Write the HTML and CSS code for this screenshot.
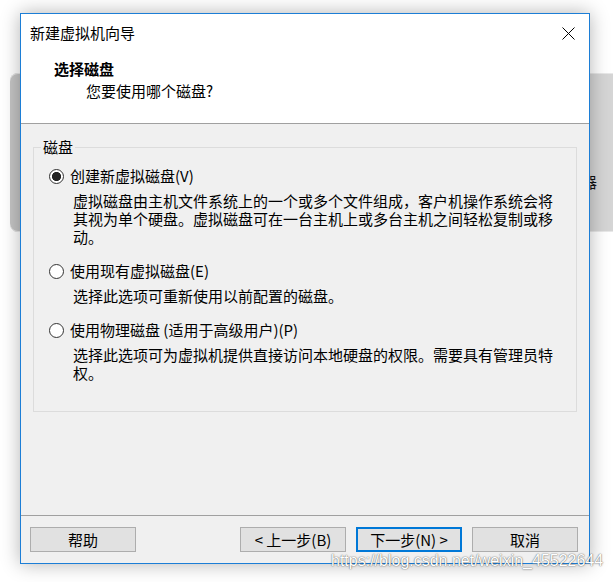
FILE: index.html
```html
<!DOCTYPE html>
<html lang="zh-CN">
<head>
<meta charset="utf-8">
<title>新建虚拟机向导</title>
<link rel="stylesheet" href="styles.css">
</head>
<body>
<div class="bgwin"><span class="bgwin-text">器</span></div>
<div class="dialog">
  <div class="titlebar">
    <span class="title">新建虚拟机向导</span>
    <svg class="close" width="13" height="13" viewBox="0 0 13 13"><path d="M0.5 0.5 L12.5 12.5 M12.5 0.5 L0.5 12.5" stroke="#000" stroke-width="1" fill="none"/></svg>
  </div>
  <div class="header">
    <div class="h-title">选择磁盘</div>
    <div class="h-sub">您要使用哪个磁盘?</div>
  </div>
  <div class="content">
    <div class="group">
      <span class="legend">磁盘</span>
      <div class="option">
        <div class="opt-label"><span class="radio checked"></span>创建新虚拟磁盘(V)</div>
        <div class="opt-desc">虚拟磁盘由主机文件系统上的一个或多个文件组成，客户机操作系统会将其视为单个硬盘。虚拟磁盘可在一台主机上或多台主机之间轻松复制或移动。</div>
      </div>
      <div class="option">
        <div class="opt-label"><span class="radio"></span>使用现有虚拟磁盘(E)</div>
        <div class="opt-desc">选择此选项可重新使用以前配置的磁盘。</div>
      </div>
      <div class="option">
        <div class="opt-label"><span class="radio"></span>使用物理磁盘 (适用于高级用户)(P)</div>
        <div class="opt-desc">选择此选项可为虚拟机提供直接访问本地硬盘的权限。需要具有管理员特权。</div>
      </div>
    </div>
  </div>
  <div class="footer">
    <button class="btn">帮助</button>
    <div class="spacer"></div>
    <button class="btn">&lt; 上一步(B)</button>
    <button class="btn default">下一步(N) &gt;</button>
    <button class="btn">取消</button>
  </div>
</div>
<div class="watermark">https://blog.csdn.net/weixin_45522644</div>
</body>
</html>
```
FILE: styles.css
```css
html, body { margin: 0; padding: 0; }
body {
  width: 613px;
  height: 582px;
  overflow: hidden;
  background: #fff;
  font-family: "Noto Sans CJK SC", "Noto Sans", sans-serif;
  font-size: 15px;
  color: #000;
  position: relative;
  padding: 13px 0 0 20px;
  box-sizing: border-box;
}
.bgwin {
  position: absolute;
  left: 10px;
  top: 73px;
  width: 603px;
  height: 159px;
  overflow: hidden;
  border-radius: 8px 0 0 8px;
  background: linear-gradient(to right, #c4c4c4 0 11px, #d5d5d5 11px);
  box-shadow: inset 0 1px 0 #e8e8e8, inset 0 -1px 0 #e8e8e8;
  z-index: 0;
}
.bgwin-text {
  position: absolute;
  left: 572px;
  top: 100px;
  line-height: 18px;
  color: #111;
}
.dialog {
  position: relative;
  z-index: 1;
  width: 570px;
  height: 551px;
  box-sizing: border-box;
  border: 1px solid #1c7ed6;
  background: #f0f0f0;
  box-shadow: 0 0 18px rgba(0, 0, 0, .3);
  display: flex;
  flex-direction: column;
}
.titlebar {
  flex: none;
  height: 38px;
  background: #fff;
  display: flex;
  align-items: center;
  justify-content: space-between;
  padding: 0 14px 0 9px;
}
.title { line-height: 18px; }
.close { display: block; }
.header {
  flex: none;
  background: #fff;
  padding: 8px 0 23px;
  border-bottom: 1px solid #a0a0a0;
}
.h-title { font-weight: bold; line-height: 18px; padding-left: 33px; }
.h-sub { line-height: 18px; margin-top: 4px; padding-left: 65px; }
.content { flex: 1; padding: 23px 12px 0; }
.group {
  position: relative;
  border: 1px solid #dcdcdc;
  height: 265px;
  box-sizing: border-box;
  padding: 18px 0 0 15px;
}
.legend {
  position: absolute;
  left: 7px;
  top: -10px;
  padding: 0 2px;
  background: #f0f0f0;
  line-height: 18px;
}
.option + .option { margin-top: 15px; }
.opt-label { display: flex; align-items: center; height: 20px; line-height: 20px; }
.radio {
  flex: none;
  width: 15px;
  height: 15px;
  box-sizing: border-box;
  border: 1px solid #333;
  border-radius: 50%;
  background: #fff;
  margin-right: 6px;
}
.radio.checked { background: radial-gradient(circle, #222 0 4.3px, #fff 4.8px); }
.opt-desc { margin-top: 6px; padding-left: 24px; width: 485px; line-height: 18px; }
.footer {
  flex: none;
  border-top: 1px solid #a0a0a0;
  height: 48px;
  box-sizing: border-box;
  padding: 11px 11px 11px 9px;
  display: flex;
  gap: 10px;
}
.spacer { flex: 1; }
.btn {
  width: 106px;
  height: 25px;
  box-sizing: border-box;
  border: 1px solid #adadad;
  background: #e1e1e1;
  font: inherit;
  color: #000;
  padding: 0;
  line-height: 23px;
}
.btn.default { border: 2px solid #0078d7; line-height: 21px; }
.watermark {
  position: absolute;
  left: 331px;
  top: 552px;
  z-index: 2;
  font-family: "Liberation Sans", Arial, sans-serif;
  font-size: 16px;
  color: #fff;
  text-shadow: 0 0 1px rgba(0, 0, 0, .6), 0 0 2px rgba(0, 0, 0, .35);
}
```
